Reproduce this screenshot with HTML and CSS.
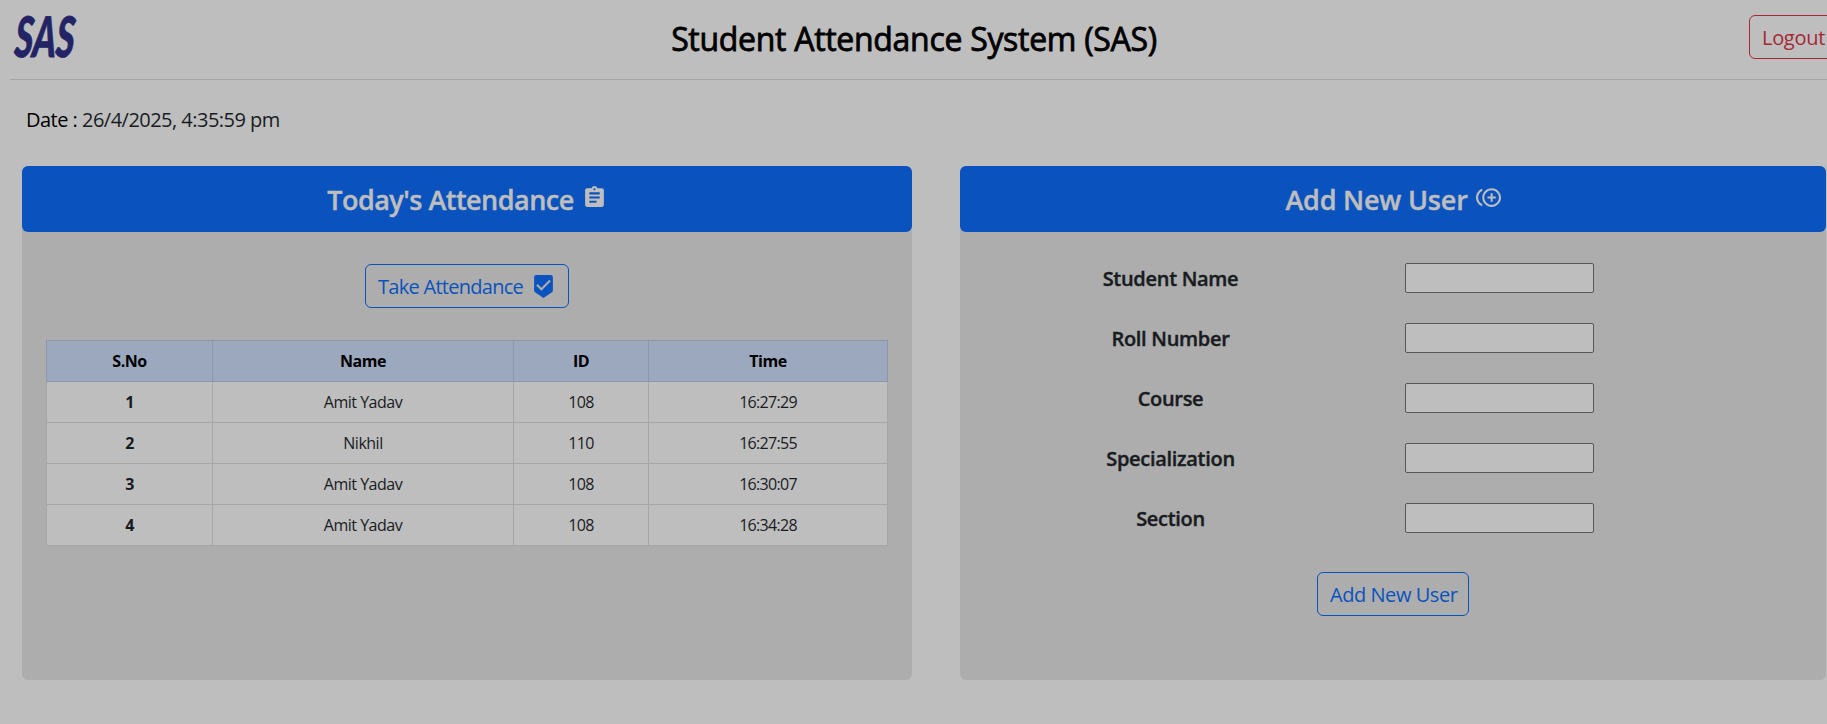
FILE: index.html
```
<!DOCTYPE html>
<html lang="en">
<head>
<meta charset="utf-8">
<title>Student Attendance System</title>
<link rel="stylesheet" href="styles.css">
</head>
<body>
<header class="topbar">
  <svg class="logo" viewBox="0 0 64 44" role="img" aria-label="SAS"><text class="logo-text" x="1" y="41" textLength="60" lengthAdjust="spacingAndGlyphs">SAS</text></svg>
  <h1 class="title">Student Attendance System (SAS)</h1>
  <button class="btn btn-danger">Logout</button>
</header>
<p class="date"><span class="date-label">Date :</span> 26/4/2025, 4:35:59 pm</p>
<main class="panels">
  <section class="panel">
    <h2 class="panel-head"><span class="head-today">Today's Attendance</span>
      <svg class="icon icon-head" viewBox="0 0 24 24"><path d="M19 3h-4.18C14.4 1.84 13.3 1 12 1c-1.3 0-2.4.84-2.82 2H5c-1.1 0-2 .9-2 2v14c0 1.1.9 2 2 2h14c1.1 0 2-.9 2-2V5c0-1.1-.9-2-2-2zm-7 0c.55 0 1 .45 1 1s-.45 1-1 1-1-.45-1-1 .45-1 1-1zm2 14H7v-2h7v2zm3-4H7v-2h10v2zm0-4H7V7h10v2z"/></svg>
    </h2>
    <button class="btn btn-primary btn-take"><span class="take-text">Take Attendance</span>
      <svg class="icon icon-solid" viewBox="0 0 24 24"><path d="M19 1H5c-1.1 0-1.99.9-1.99 2L3 15.93c0 .69.35 1.3.88 1.66L12 23l8.11-5.41c.53-.36.88-.97.88-1.66L21 3c0-1.1-.9-2-2-2zm-9 15l-5-5 1.41-1.41L10 13.17l7.59-7.59L19 7l-9 9z"/></svg>
    </button>
    <table class="table">
      <colgroup><col class="c-no"><col class="c-name"><col class="c-id"><col class="c-time"></colgroup>
      <thead><tr><th>S.No</th><th>Name</th><th>ID</th><th>Time</th></tr></thead>
      <tbody>
        <tr><th>1</th><td>Amit Yadav</td><td class="num">108</td><td class="num">16:27:29</td></tr>
        <tr><th>2</th><td>Nikhil</td><td class="num">110</td><td class="num">16:27:55</td></tr>
        <tr><th>3</th><td>Amit Yadav</td><td class="num">108</td><td class="num">16:30:07</td></tr>
        <tr><th>4</th><td>Amit Yadav</td><td class="num">108</td><td class="num">16:34:28</td></tr>
      </tbody>
    </table>
  </section>
  <section class="panel">
    <h2 class="panel-head"><span class="head-add">Add New User</span>
      <svg class="icon icon-head" viewBox="0 0 24 24"><path d="M16 8h-2v3h-3v2h3v3h2v-3h3v-2h-3V8zM2 12c0-2.79 1.64-5.2 4.01-6.32V3.52C2.52 4.76 0 8.09 0 12s2.52 7.24 6.01 8.48v-2.16C3.64 17.2 2 14.79 2 12zm13-9c-4.96 0-9 4.04-9 9s4.04 9 9 9 9-4.04 9-9-4.04-9-9-9zm0 16c-3.86 0-7-3.14-7-7s3.14-7 7-7 7 3.14 7 7-3.14 7-7 7z"/></svg>
    </h2>
    <form class="form">
      <label for="f1">Student Name</label><input id="f1" type="text">
      <label for="f2">Roll Number</label><input id="f2" type="text">
      <label for="f3">Course</label><input id="f3" type="text">
      <label for="f4">Specialization</label><input id="f4" type="text">
      <label for="f5">Section</label><input id="f5" type="text">
    </form>
    <button class="btn btn-primary btn-add">Add New User</button>
  </section>
</main>
</body>
</html>
```
FILE: styles.css
```
* { box-sizing: border-box; }
html { overflow: hidden; }
body {
  margin: 0;
  width: 1827px;
  height: 724px;
  overflow: hidden;
  background: #bebebe;
  color: #191c1f;
  font-family: "Segoe UI", "Open Sans", "Noto Sans", sans-serif;
  font-size: 20px;
  line-height: 30px;
}
.topbar {
  display: grid;
  grid-template-columns: 200px 1fr 200px;
  align-items: start;
  width: 1827px;
  height: 80px;
  margin-left: 10px;
  border-bottom: 1px solid #a5a5a5;
}
.logo { width: 64px; height: 44px; margin: 16px 0 0 4px; overflow: visible; }
.logo-text {
  font: italic 900 56px Lato, sans-serif;
  fill: #222466;
  stroke: #222466;
  stroke-width: 0.8px;
  transform: skewX(-4deg);
  transform-origin: 32px 22px;
}
.title {
  margin: 20px 0 0 -19px;
  color: #000;
  font-size: 32px;
  font-weight: 400;
  line-height: 38px;
  letter-spacing: -0.3px;
  text-align: center;
  white-space: nowrap;
  -webkit-text-stroke: 0.8px #000;
}
.btn {
  height: 44px;
  padding: 2px 12px 0;
  border: 1px solid;
  border-radius: 6px;
  background: transparent;
  font: inherit;
  text-align: left;
  white-space: nowrap;
}
.btn-danger { width: 90px; margin: 15px 0 0 112px; color: #a52834; letter-spacing: -0.3px; }
.btn-primary { color: #0a53be; }
.date {
  height: 61px;
  margin: 25px 0 0 26px;
  letter-spacing: -0.52px;
  white-space: nowrap;
}
.date-label { color: #000; }
.panels {
  display: grid;
  grid-template-columns: 890px 866px;
  column-gap: 48px;
  margin-left: 22px;
}
.panel {
  display: flex;
  flex-direction: column;
  align-items: center;
  height: 514px;
  border-radius: 6px;
  background: #adadad;
}
.panel-head {
  display: flex;
  justify-content: center;
  align-items: center;
  gap: 8px;
  width: 100%;
  height: 66px;
  margin: 0;
  border-radius: 6px;
  background: #0a53be;
  color: #bebebe;
  font-size: 27px;
  font-weight: 600;
  -webkit-text-stroke: 0.4px #bebebe;
}
.head-today { padding-top: 2px; letter-spacing: -0.52px; }
.head-add { padding-top: 2px; letter-spacing: -0.2px; }
.icon { width: 25px; height: 25px; flex: none; fill: currentColor; }
.icon-head { margin-bottom: 3px; }
.btn-take {
  display: flex;
  align-items: center;
  gap: 8px;
  width: 204px;
  margin-top: 32px;
}
.take-text { letter-spacing: -0.72px; }
.icon-solid { margin-bottom: 2px; }
.table {
  width: 842px;
  margin-top: 32px;
  border-collapse: collapse;
  table-layout: fixed;
  font-size: 16px;
  line-height: 24px;
  letter-spacing: -0.5px;
}
.c-no { width: 166px; }
.c-name { width: 301px; }
.c-id { width: 135px; }
.c-time { width: 239px; }
.table th, .table td {
  height: 41px;
  padding: 0;
  border: 1px solid #a4a7aa;
  background: #bebebe;
  text-align: center;
}
.table .num { letter-spacing: -0.7px; }
.table thead th { border-color: #8b98ab; background: #9ba8be; color: #000; }
.form {
  display: grid;
  grid-template-columns: 421px 189px;
  grid-auto-rows: 30px;
  column-gap: 24px;
  row-gap: 30px;
  align-self: flex-start;
  margin-top: 31px;
}
.form label {
  font-weight: 600;
  letter-spacing: -0.3px;
  line-height: 31px;
  text-align: center;
  -webkit-text-stroke: 0.4px #191c1f;
}
.form input {
  width: 189px;
  height: 30px;
  margin: 0;
  padding: 1px 2px;
  border: 1px solid #585858;
  border-radius: 2px;
  background: #bebebe;
}
.btn-add { width: 152px; margin-top: 39px; letter-spacing: -0.45px; }
```
